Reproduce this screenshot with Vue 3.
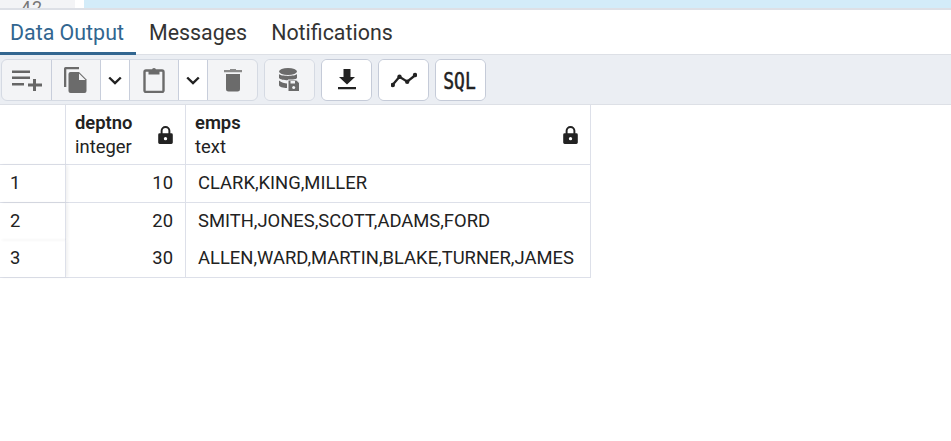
<script setup>
const rows = [
  { n: 1, d: 10, e: 'CLARK,KING,MILLER' },
  { n: 2, d: 20, e: 'SMITH,JONES,SCOTT,ADAMS,FORD' },
  { n: 3, d: 30, e: 'ALLEN,WARD,MARTIN,BLAKE,TURNER,JAMES' },
]
</script>

<template>
  <div class="page">
    <div class="editor">
      <div class="gutter"><span>42</span></div>
      <div class="gap"></div>
      <div class="line"></div>
    </div>
    <div class="tabs">
      <div class="tab active">Data Output</div>
      <div class="tab">Messages</div>
      <div class="tab">Notifications</div>
    </div>
    <div class="toolbar">
      <div class="group">
        <button class="btn w50">
          <svg width="32" height="24" viewBox="0 0 32 24"><path d="M1 2.500h18V5H1zM1 8.500h18V11H1zM1 15h12v2.500H1zM22 11h3v4.500h6v3h-6V23h-3v-4.500h-5v-3h5z" fill="#666"/></svg>
        </button>
        <button class="btn w49">
          <svg width="24" height="28" viewBox="0 0 24 28"><path d="M1.500 1H15v2.200H2.300V21H0V2.500A1.500 1.500 0 0 1 1.500 1z" fill="#6b6b6b"/><path d="M6.500 6H15l7.500 7.500V25a2 2 0 0 1-2 2h-14a2 2 0 0 1-2-2V8a2 2 0 0 1 2-2z" fill="#6b6b6b"/><path d="M15 7.500V14h6.500z" fill="#f3f4f6"/></svg>
        </button>
        <button class="btn caret">
          <svg width="14" height="9" viewBox="0 0 14 9"><path d="M1.200 1.500 7 7l5.800-5.500" fill="none" stroke="#222" stroke-width="2.400"/></svg>
        </button>
        <button class="btn w49">
          <svg width="22" height="26" viewBox="0 0 22 26"><path d="M3 3.500h16a1.500 1.500 0 0 1 1.500 1.500v18.500A1.500 1.500 0 0 1 19 25H3a1.500 1.500 0 0 1-1.500-1.500V5A1.500 1.500 0 0 1 3 3.500z" fill="none" stroke="#6b6b6b" stroke-width="2.400"/><path d="M5.500 3H9a2 2 0 0 1 4 0h3.500v4.500h-11z" fill="#6b6b6b"/></svg>
        </button>
        <button class="btn caret">
          <svg width="14" height="9" viewBox="0 0 14 9"><path d="M1.200 1.500 7 7l5.800-5.500" fill="none" stroke="#222" stroke-width="2.400"/></svg>
        </button>
        <button class="btn w49 last">
          <svg width="18" height="24" viewBox="0 0 18 24"><path d="M6 1h6v1h6v2.200H0V2h6z" fill="#8a8a8a"/><path d="M2 6h14v15a2.500 2.500 0 0 1-2.500 2.500h-9A2.500 2.500 0 0 1 2 21z" fill="#6b6b6b"/></svg>
        </button>
      </div>
      <div class="group single muted">
        <button class="btn">
          <svg width="22" height="24" viewBox="0 0 22 24"><ellipse cx="9" cy="3.500" rx="9" ry="3.500" fill="#6b6b6b"/><path d="M0 6c2 2.500 16 2.500 18 0v4c-2 3-16 3-18 0zM0 12.500c2 2 6 3 8 3v4.500c-4 0-8-1-8-3z" fill="#6b6b6b"/><path d="M9 12h8.500l3 3v8.500H9z" fill="#6b6b6b" stroke="#f3f4f6"/><path d="M11.500 13h4.500v2.500h-4.500z" fill="#f3f4f6"/><circle cx="14.700" cy="19.500" r="1.500" fill="#f3f4f6"/></svg>
        </button>
      </div>
      <div class="group single">
        <button class="btn">
          <svg width="18" height="22" viewBox="0 0 18 22"><path d="M5.500 0h7v8H17l-8 7.500L1 8h4.500zM0 18h18v2.300H0z" fill="#222"/></svg>
        </button>
      </div>
      <div class="group single">
        <button class="btn">
          <svg width="26" height="16" viewBox="0 0 26 16"><path d="M1.500 13 8.500 4.700l7.700 5L24.500 3" fill="none" stroke="#222" stroke-width="2.300"/><circle cx="1.800" cy="13" r="2.200" fill="#222"/><circle cx="8.500" cy="4.700" r="2.200" fill="#222"/><circle cx="16.200" cy="9.700" r="2.200" fill="#222"/><circle cx="24" cy="3" r="2.200" fill="#222"/></svg>
        </button>
      </div>
      <div class="group single">
        <button class="btn sql"><span>SQL</span></button>
      </div>
    </div>
    <div class="grid">
      <div class="row head">
        <div class="c num"></div>
        <div class="c dept">
          <div class="titles"><b>deptno</b><span>integer</span></div>
          <svg class="lock" width="15" height="18" viewBox="0.500 0.500 15 18.500"><path d="M3 8V5.500a5 5 0 0 1 10 0V8h1a1.500 1.500 0 0 1 1.500 1.500v8A1.500 1.500 0 0 1 14 19H2a1.500 1.500 0 0 1-1.500-1.500v-8A1.500 1.500 0 0 1 2 8zm2 0h6V5.500a3 3 0 0 0-6 0z" fill="#222" fill-rule="evenodd"/><circle cx="8" cy="13.500" r="1.700" fill="#fff"/></svg>
        </div>
        <div class="c emps">
          <div class="titles"><b>emps</b><span>text</span></div>
          <svg class="lock" width="15" height="18" viewBox="0.500 0.500 15 18.500"><path d="M3 8V5.500a5 5 0 0 1 10 0V8h1a1.500 1.500 0 0 1 1.500 1.500v8A1.500 1.500 0 0 1 14 19H2a1.500 1.500 0 0 1-1.500-1.500v-8A1.500 1.500 0 0 1 2 8zm2 0h6V5.500a3 3 0 0 0-6 0z" fill="#222" fill-rule="evenodd"/><circle cx="8" cy="13.500" r="1.700" fill="#fff"/></svg>
        </div>
      </div>
      <div v-for="r in rows" :key="r.n" class="row body" :class="'r' + r.n">
        <div class="c num">{{ r.n }}</div>
        <div class="c dept val">{{ r.d }}</div>
        <div class="c emps val">{{ r.e }}</div>
      </div>
    </div>
  </div>
</template>

<style scoped>
.page {
  width: 951px;
  height: 441px;
  overflow: hidden;
  background: #fff;
  font-family: Roboto, sans-serif;
  color: #222;
}
.editor {
  display: flex;
  height: 8px;
  overflow: hidden;
}
.gutter {
  width: 75px;
  background: #f3f4f6;
  color: #777;
  font-size: 18px;
  line-height: 20px;
  text-align: right;
  padding-right: 32px;
  box-sizing: border-box;
}
.gutter span {
  display: block;
  margin-top: -2px;
  letter-spacing: 1px;
}
.gap {
  width: 9px;
  background: #fff;
}
.line {
  flex: 1;
  background: #d3ecf9;
}
.tabs {
  display: flex;
  height: 44px;
  border-top: 2px solid #dde0e6;
  border-bottom: 1px solid #dde0e6;
}
.tab {
  padding: 0 11px 0 13px;
  font-size: 21.4px;
  line-height: 45px;
  color: #333;
}
.tab.active {
  padding: 0 12px 0 10px;
  color: #326690;
  border-bottom: 3px solid #326690;
  height: 42px;
  width: 114px;
}
.toolbar {
  display: flex;
  gap: 6px;
  height: 50px;
  padding: 4px 0 0 1px;
  box-sizing: border-box;
  background: #ebeef3;
  border-bottom: 1px solid #dde0e6;
}
.group {
  display: flex;
  height: 42px;
  border: 1px solid #d5dae3;
  border-radius: 6px;
  overflow: hidden;
  background: #f3f4f6;
  box-sizing: border-box;
}
.btn {
  display: flex;
  align-items: center;
  justify-content: center;
  padding: 0;
  margin: 0;
  border: 0;
  border-right: 1px solid #c8cedb;
  background: transparent;
  box-sizing: border-box;
}
.w50 { width: 50px; }
.w49 { width: 49px; }
.last { border-right: 0; }
.caret {
  width: 29px;
  background: #fff;
}
.single {
  background: #fff;
  border-color: #c5cbd8;
}
.single .btn {
  width: 49px;
  border-right: 0;
  background: #fff;
}
.single.muted {
  background: #f3f4f6;
  border-color: #d5dae3;
}
.single.muted .btn {
  background: #f3f4f6;
}
.sql {
  font-family: "DejaVu Sans Mono", monospace;
  font-size: 18px;
  color: #222;
}
.sql span {
  display: block;
  margin-left: -2px;
  transform: scaleY(1.3);
  -webkit-text-stroke: 0.4px #222;
}
.grid {
  width: 591px;
}
.row {
  display: flex;
  box-sizing: border-box;
}
.c {
  box-sizing: border-box;
  border-right: 1px solid #dde0e9;
}
.num { width: 66px; padding-left: 10px; }
.dept { width: 120px; }
.emps { width: 405px; }
.head {
  height: 60px;
  border-bottom: 1px solid #dde0e9;
}
.head .c {
  display: flex;
  align-items: center;
  justify-content: space-between;
  padding: 0 12px 0 9px;
  height: 59px;
}
.titles {
  display: flex;
  flex-direction: column;
  font-size: 18.4px;
  line-height: 24px;
}
.titles b {
  font-weight: 600;
}
.lock {
  flex: none;
}
.body {
  font-size: 18.4px;
  line-height: 36px;
  border-bottom: 1px solid #dde0e9;
}
.body .num {
  box-shadow: 2px 0 3px rgba(0, 0, 0, 0.06);
}
.r1 { height: 38px; }
.r2 { height: 37px; border-bottom: 0; }
.r3 { height: 38px; }
.dept.val {
  text-align: right;
  padding-right: 12px;
}
.emps.val {
  padding-left: 12px;
}
</style>

<style>
html, body { margin: 0; background: #fff; }
</style>
